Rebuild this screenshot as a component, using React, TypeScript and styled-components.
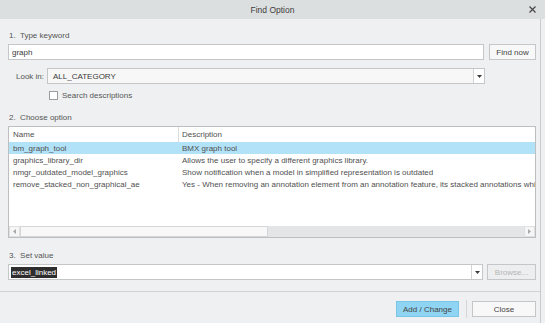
import React from 'react';
import styled, { createGlobalStyle } from 'styled-components';

const GlobalStyle = createGlobalStyle`
  html, body {
    margin: 0;
    padding: 0;
    background: #eef0f1;
  }
  body {
    font-family: "Liberation Sans", Arial, sans-serif;
    font-size: 8px;
    color: #575757;
  }
`;

const Dialog = styled.div`
  width: 545px;
  height: 323px;
  display: flex;
  flex-direction: column;
  background: #eef0f1;
  overflow: hidden;
`;

const TitleBar = styled.div`
  height: 19px;
  flex: none;
  display: grid;
  grid-template-columns: 1fr auto 1fr;
  align-items: center;
  background: #dcdfe0;
  color: #3c3c3c;
`;

const Title = styled.div`
  grid-column: 2;
  font-size: 8.5px;
`;

const CloseX = styled.div`
  grid-column: 3;
  justify-self: end;
  display: flex;
  padding-right: 9px;
`;

const Frame = styled.div`
  flex: 1;
  margin-right: 4px;
  border-right: 1px solid #c8cacb;
  display: flex;
  flex-direction: column;
`;

const Body = styled.div`
  padding: 11px 4px 11px 8px;
  display: flex;
  flex-direction: column;
`;

const SectionLabel = styled.div<{ $top?: number }>`
  height: 12px;
  line-height: 12px;
  margin-top: ${p => p.$top ?? 0}px;
  margin-bottom: 2px;
  padding-left: 1px;
  color: #555;
`;

const Row = styled.div<{ $top?: number }>`
  display: flex;
  align-items: center;
  height: 16px;
  margin-top: ${p => p.$top ?? 0}px;
`;

const TextBox = styled.div`
  box-sizing: border-box;
  height: 16px;
  flex: 1;
  background: #fff;
  border: 1px solid #c4c6c7;
  display: flex;
  align-items: center;
  padding-left: 3px;
  color: #3a3a3a;
`;

const Spacer = styled.div<{ $w: number }>`
  width: ${p => p.$w}px;
  flex: none;
`;

const ComboBox = styled.div<{ $width: number; $flat?: boolean }>`
  box-sizing: border-box;
  height: 16px;
  width: ${p => p.$width}px;
  background: ${p => (p.$flat ? '#f7f7f7' : '#fff')};
  border: 1px solid #c4c6c7;
  display: flex;
  align-items: stretch;
`;

const ComboText = styled.div<{ $pad?: number }>`
  flex: 1;
  display: flex;
  align-items: center;
  padding-left: ${p => p.$pad ?? 2}px;
  color: #3a3a3a;
`;

const ArrowBox = styled.div`
  width: 10px;
  border-left: 1px solid #d2d4d5;
  display: flex;
  align-items: center;
  justify-content: center;
  background: #fff;
`;

const Button = styled.div<{ $width: number; $disabled?: boolean; $primary?: boolean }>`
  box-sizing: border-box;
  width: ${p => p.$width}px;
  height: 16px;
  display: flex;
  align-items: center;
  justify-content: center;
  border: 1px solid ${p => (p.$primary ? '#79c6e6' : '#c4c6c7')};
  background: ${p => (p.$primary ? '#8fd5f3' : p.$disabled ? '#eceeef' : '#f8f8f8')};
  color: ${p => (p.$disabled ? '#b4b6b7' : '#444')};
`;

const LookLabel = styled.div`
  width: 31px;
  padding-left: 8px;
  color: #555;
`;

const CheckRow = styled.div`
  display: flex;
  align-items: center;
  height: 10px;
  margin-top: 6px;
  padding-left: 41px;
  gap: 4px;
`;

const CheckBox = styled.div`
  box-sizing: border-box;
  width: 9px;
  height: 9px;
  border: 1px solid #9a9c9d;
  background: #fff;
`;

const List = styled.div`
  box-sizing: border-box;
  height: 112px;
  border: 1px solid #bcbebf;
  background: #fff;
  display: flex;
  flex-direction: column;
`;

const ListRow = styled.div<{ $header?: boolean; $selected?: boolean }>`
  display: grid;
  grid-template-columns: 169px 1fr;
  height: ${p => (p.$header ? 15 : 12)}px;
  align-items: center;
  background: ${p => (p.$selected ? '#b2e2f8' : '#fff')};
  color: #505050;
  white-space: nowrap;
  overflow: hidden;
`;

const Cell = styled.div<{ $divider?: boolean }>`
  height: 100%;
  display: flex;
  align-items: center;
  padding-left: ${p => (p.$divider ? 3 : 3)}px;
  border-left: 1px solid ${p => (p.$divider ? '#dcdcdc' : 'transparent')};
  overflow: hidden;
`;

const Filler = styled.div`
  flex: 1;
`;

const HScroll = styled.div`
  height: 11px;
  display: flex;
  background: #e4e5e6;
`;

const ScrollArrow = styled.div`
  width: 11px;
  display: flex;
  align-items: center;
  justify-content: center;
  background: #f6f6f6;
  border: 1px solid #e0e0e0;
  box-sizing: border-box;
`;

const ScrollThumb = styled.div`
  width: 248px;
  box-sizing: border-box;
  background: #f8f8f8;
  border: 1px solid #d6d6d6;
`;

const Selected = styled.span`
  background: #2e2e2e;
  color: #fff;
  padding: 1px 1px;
`;

const Footer = styled.div`
  border-top: 1px solid #d0d2d3;
  padding: 8px 4px 0 0;
  display: flex;
  justify-content: flex-end;
  align-items: center;
`;

const Divider = styled.div`
  width: 1px;
  height: 18px;
  background: #d4d6d7;
  margin: 0 5px 0 7px;
`;

const Triangle = ({ dir }: { dir: 'down' | 'left' | 'right' }) => {
  const pts =
    dir === 'down' ? '0,0 5,0 2.5,3' : dir === 'left' ? '3,0 3,5 0,2.5' : '0,0 0,5 3,2.5';
  const w = dir === 'down' ? 5 : 3;
  const h = dir === 'down' ? 3 : 5;
  return (
    <svg width={w} height={h} viewBox={`0 0 ${w} ${h}`}>
      <polygon points={pts} fill={dir === 'down' ? '#3a3a3a' : '#a8a8a8'} />
    </svg>
  );
};

const options = [
  { name: 'bm_graph_tool', desc: 'BMX graph tool' },
  { name: 'graphics_library_dir', desc: 'Allows the user to specify a different graphics library.' },
  {
    name: 'nmgr_outdated_model_graphics',
    desc: 'Show notification when a model in simplified representation is outdated',
  },
  {
    name: 'remove_stacked_non_graphical_ae',
    desc: 'Yes - When removing an annotation element from an annotation feature, its stacked annotations which are not graphical',
  },
];

export default function App() {
  return (
    <>
      <GlobalStyle />
      <Dialog>
        <TitleBar>
          <Title>Find Option</Title>
          <CloseX>
            <svg width="7" height="7" viewBox="0 0 7 7">
              <path d="M0.5 0.5 L6.5 6.5 M6.5 0.5 L0.5 6.5" stroke="#4a4a4a" strokeWidth="1.3" />
            </svg>
          </CloseX>
        </TitleBar>
        <Frame>
          <Body>
            <SectionLabel>1.&nbsp; Type keyword</SectionLabel>
            <Row>
              <TextBox>graph</TextBox>
              <Spacer $w={5} />
              <Button $width={47}>Find now</Button>
            </Row>

            <Row $top={8}>
              <LookLabel>Look in:</LookLabel>
              <ComboBox $width={438} $flat>
                <ComboText $pad={5}>ALL_CATEGORY</ComboText>
                <ArrowBox>
                  <Triangle dir="down" />
                </ArrowBox>
              </ComboBox>
            </Row>

            <CheckRow>
              <CheckBox />
              <span>Search descriptions</span>
            </CheckRow>

            <SectionLabel $top={12}>2.&nbsp; Choose option</SectionLabel>
            <List>
              <ListRow $header>
                <Cell>Name</Cell>
                <Cell $divider>Description</Cell>
              </ListRow>
              {options.map((o, i) => (
                <ListRow key={o.name} $selected={i === 0}>
                  <Cell>{o.name}</Cell>
                  <Cell>{o.desc}</Cell>
                </ListRow>
              ))}
              <Filler />
              <HScroll>
                <ScrollArrow>
                  <Triangle dir="left" />
                </ScrollArrow>
                <ScrollThumb />
                <Filler />
                <ScrollArrow>
                  <Triangle dir="right" />
                </ScrollArrow>
              </HScroll>
            </List>

            <SectionLabel $top={12}>3.&nbsp; Set value</SectionLabel>
            <Row>
              <ComboBox $width={475}>
                <ComboText>
                  <Selected>excel_linked</Selected>
                </ComboText>
                <ArrowBox>
                  <Triangle dir="down" />
                </ArrowBox>
              </ComboBox>
              <Spacer $w={4} />
              <Button $width={49} $disabled>
                Browse...
              </Button>
            </Row>
          </Body>
          <Footer>
            <Button $width={63} $primary>
              Add / Change
            </Button>
            <Divider />
            <Button $width={64}>Close</Button>
          </Footer>
        </Frame>
      </Dialog>
    </>
  );
}
